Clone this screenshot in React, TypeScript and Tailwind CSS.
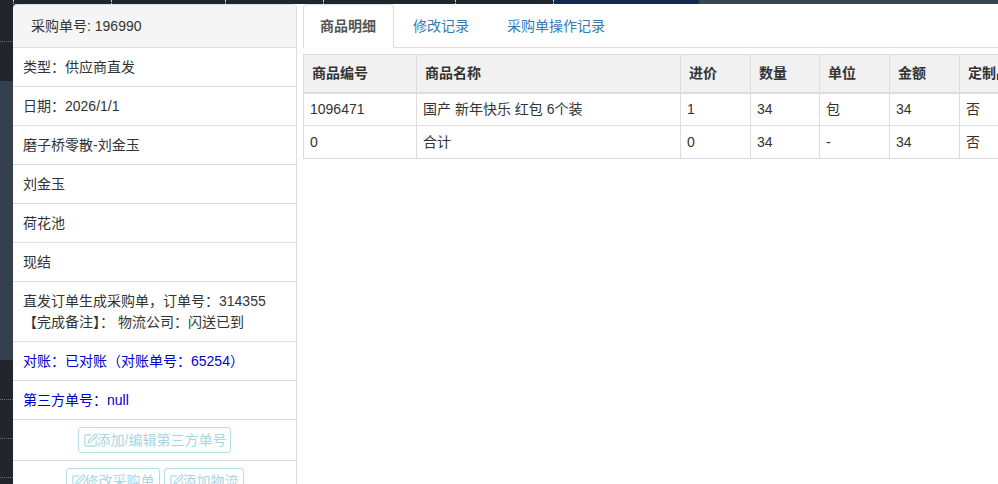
import { SquarePen } from "lucide-react";

const font = { fontFamily: '"Liberation Sans", "Noto Sans CJK SC", sans-serif' };

function Row({ children, blue, h = "h-[39px]" }: { children: React.ReactNode; blue?: boolean; h?: string }) {
  return (
    <div className={`${h} shrink-0 border-b border-[#ddd] px-[10px] flex items-center text-[14px] ${blue ? "text-[#0000cc]" : "text-[#333]"}`}>
      {children}
    </div>
  );
}

function Btn({ label }: { label: string }) {
  return (
    <span className="h-[26px] px-[4px] inline-flex items-center border border-[#b6dce6] rounded-[3px] text-[14px] text-[#a8d6e3] bg-white leading-none">
      <SquarePen size={15} strokeWidth={1.8} className="shrink-0 -mr-[1px]" />
      {label}
    </span>
  );
}

const cols = [113, 264, 70, 69, 70, 70, 70];
const heads = ["商品编号", "商品名称", "进价", "数量", "单位", "金额", "定制品"];
const rows = [
  ["1096471", "国产 新年快乐 红包 6个装", "1", "34", "包", "34", "否"],
  ["0", "合计", "0", "34", "-", "34", "否"],
];
const tick = "border-r border-dotted border-white/80";
const dots = "border-b border-dotted border-[#6b7280]";

export default function App() {
  return (
    <div style={font} className="w-[998px] h-[484px] overflow-hidden flex flex-col bg-white">
      <div className="h-[4px] shrink-0 flex">
        <div className={`w-[14px] bg-[#20262c] ${tick}`} />
        <div className={`w-[98px] bg-[#20262c] ${tick}`} />
        <div className={`w-[114px] bg-[#20262c] ${tick}`} />
        <div className={`w-[98px] bg-[#20262c] ${tick}`} />
        <div className={`w-[132px] bg-[#20262c] ${tick}`} />
        <div className={`w-[98px] bg-[#20262c] ${tick}`} />
        <div className="w-[145px] bg-[#14294f]" />
        <div className="flex-1 bg-[#3a4552]" />
      </div>
      <div className="flex flex-1 min-h-0">
        <div className="w-[13px] shrink-0 flex flex-col">
          <div className={`h-[38px] bg-[#20262c] ${dots}`} />
          <div className="h-[39px] bg-[#20262c]" />
          <div className="h-[279px] bg-[#34404d]" />
          <div className={`h-[40px] bg-[#20262c] ${dots}`} />
          <div className={`h-[39px] bg-[#20262c] ${dots}`} />
          <div className={`h-[39px] bg-[#20262c] ${dots}`} />
          <div className="flex-1 bg-[#20262c]" />
        </div>
        <div className="w-[284px] shrink-0 border-r border-[#ddd] flex flex-col rounded-tr-[4px]">
          <div className="h-[44px] shrink-0 bg-[linear-gradient(to_right,#20262c_8px,#ffffff_8px)]">
            <div className="h-[44px] bg-[#f5f5f5] border-b border-[#ddd] border-t pl-[18px] flex items-center text-[14px] text-[#333] rounded-t-[4px]">
              采购单号: 196990
            </div>
          </div>
          <Row>类型：供应商直发</Row>
          <Row>日期：2026/1/1</Row>
          <Row>磨子桥零散-刘金玉</Row>
          <Row>刘金玉</Row>
          <Row>荷花池</Row>
          <Row>现结</Row>
          <Row h="h-[60px]">
            <div className="leading-[21px]">
              直发订单生成采购单，订单号：314355
              <br />
              【完成备注】： 物流公司：闪送已到
            </div>
          </Row>
          <Row blue>对账：已对账（对账单号：65254）</Row>
          <Row blue>第三方单号：null</Row>
          <div className="h-[41px] shrink-0 border-b border-[#ddd] flex items-center justify-center">
            <Btn label="添加/编辑第三方单号" />
          </div>
          <div className="flex-1 flex justify-center gap-[4px] pt-[7px]">
            <Btn label="修改采购单" />
            <Btn label="添加物流" />
          </div>
        </div>
        <div className="flex-1 min-w-0 pl-[6px] overflow-hidden">
          <div className="h-[44px] flex border-b border-[#ddd] text-[14px]">
            <div className="h-[44px] w-[91px] bg-white border border-[#ddd] border-b-white rounded-t-[4px] flex items-center justify-center font-bold text-[#555] pr-[1px]">
              商品明细
            </div>
            <div className="ml-[19px] pt-[1px] flex items-center text-[#337ab7]">修改记录</div>
            <div className="ml-[38px] pt-[1px] flex items-center text-[#337ab7]">采购单操作记录</div>
          </div>
          <table className="mt-[6px] border-collapse table-fixed text-[14px] text-[#333] w-[726px] max-w-none">
            <colgroup>
              {cols.map((w, i) => (
                <col key={i} style={{ width: w }} />
              ))}
            </colgroup>
            <thead>
              <tr className="h-[38px] bg-[#f1f1f1]">
                {heads.map((h) => (
                  <th key={h} className="border border-[#ddd] border-b-2 pl-[8px] text-left font-bold whitespace-nowrap overflow-hidden">
                    {h}
                  </th>
                ))}
              </tr>
            </thead>
            <tbody>
              {rows.map((r, i) => (
                <tr key={i} className="h-[33px]">
                  {r.map((c, j) => (
                    <td key={j} className="border border-[#ddd] pl-[6px] whitespace-nowrap">
                      {c}
                    </td>
                  ))}
                </tr>
              ))}
            </tbody>
          </table>
        </div>
      </div>
    </div>
  );
}
